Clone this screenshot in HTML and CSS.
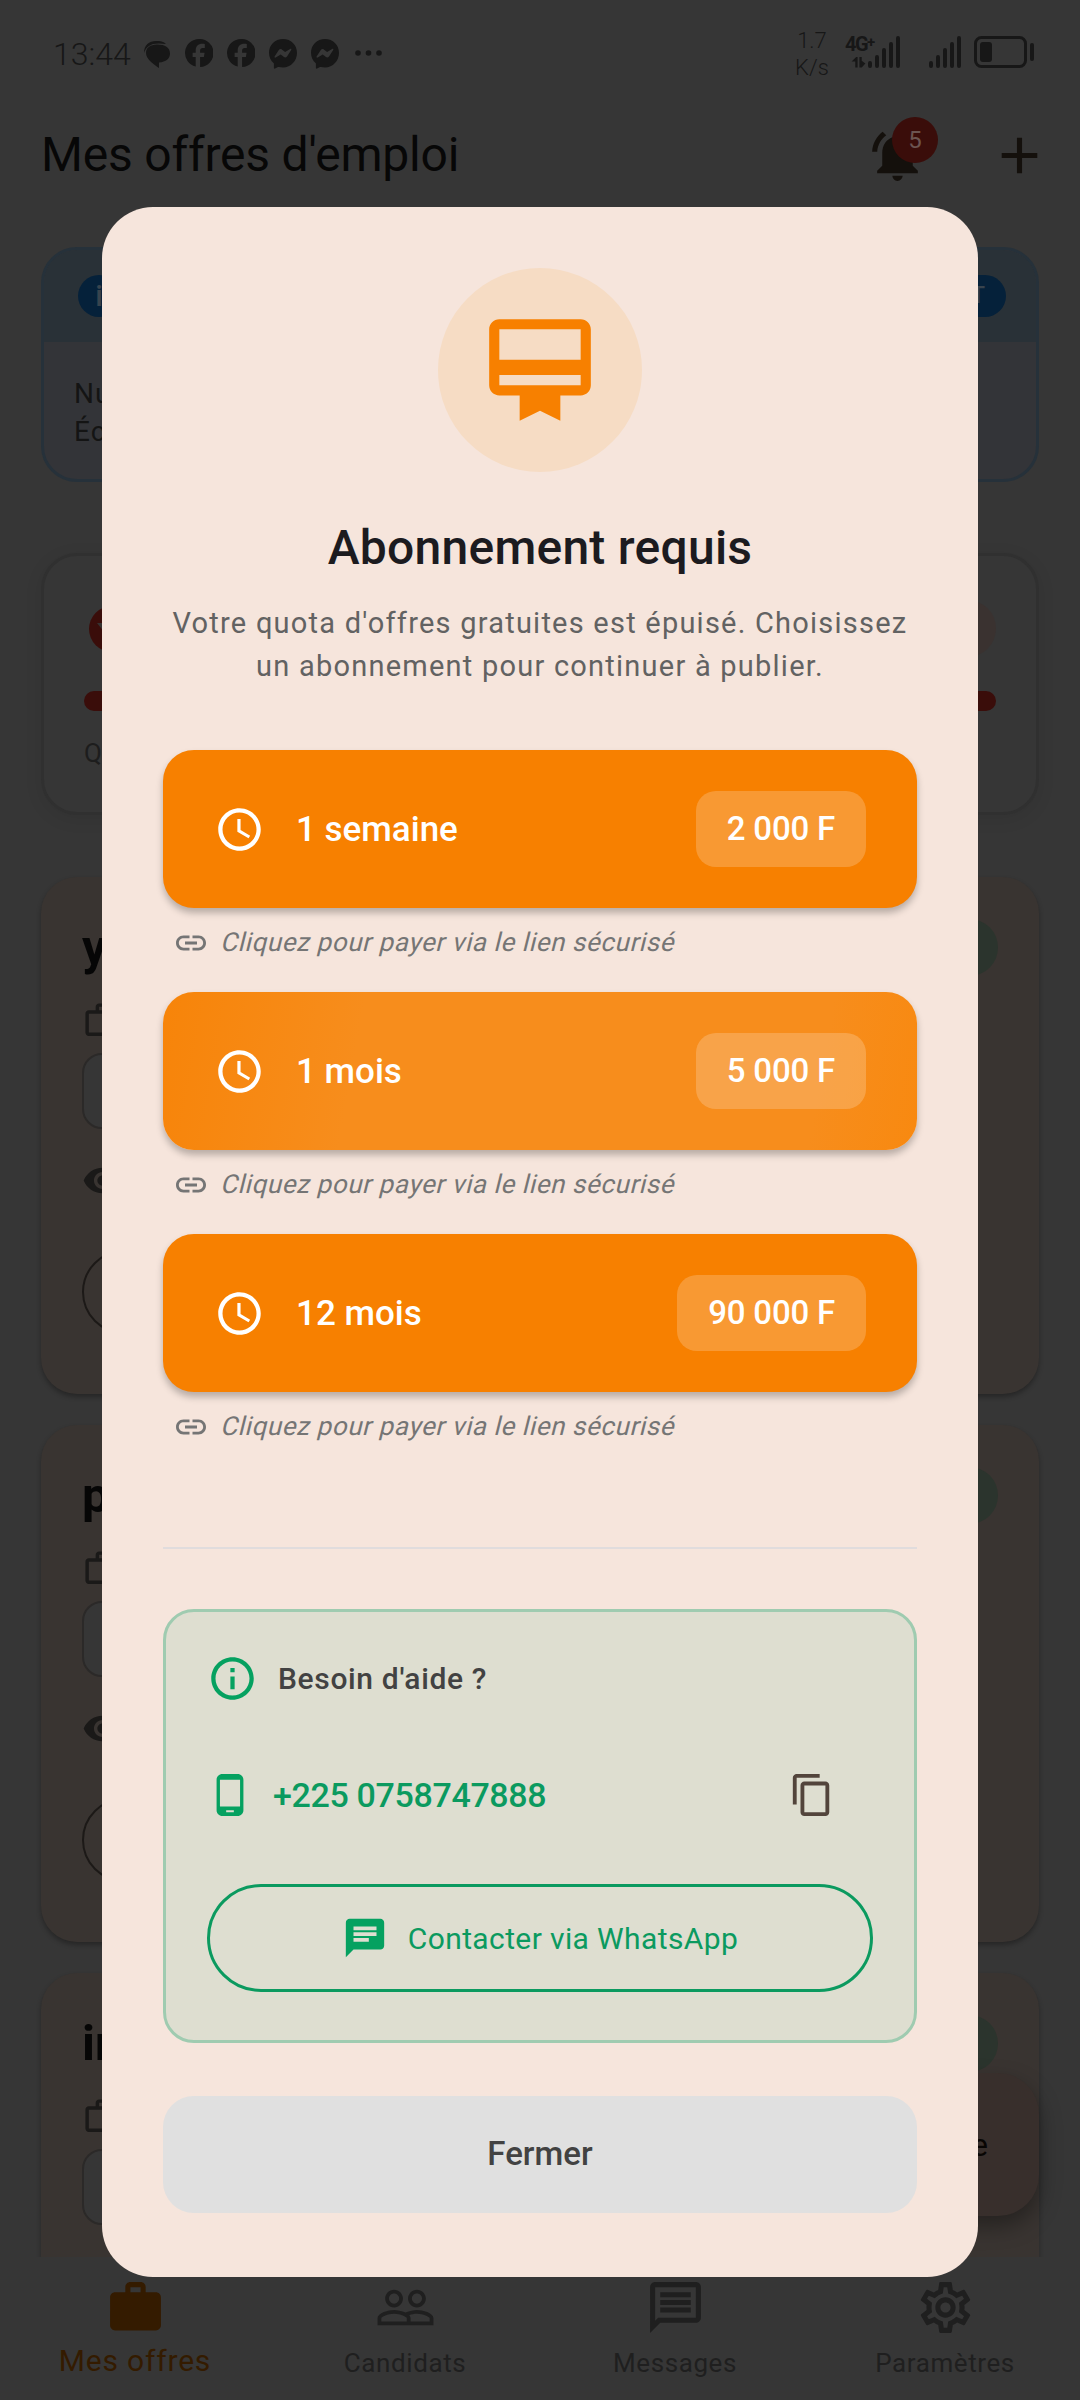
FILE: index.html
```html
<!DOCTYPE html>
<html lang="fr">
<head>
<meta charset="utf-8">
<title>Mes offres d'emploi</title>
<link rel="stylesheet" href="styles.css">
</head>
<body>
<svg width="0" height="0" class="defs" aria-hidden="true">
  <symbol id="work-outline" viewBox="0 0 24 24"><path fill-rule="evenodd" d="M14 6V4h-4v2h4zM4 8v11h16V8H4zm16-2c1.11 0 2 .89 2 2v11c0 1.11-.89 2-2 2H4c-1.11 0-2-.89-2-2l.01-11c0-1.11.88-2 1.99-2h4V4c0-1.11.89-2 2-2h4c1.11 0 2 .89 2 2v2h4z"/></symbol>
  <symbol id="eye" viewBox="0 0 24 24"><path d="M12 4.5C7 4.5 2.73 7.61 1 12c1.73 4.39 6 7.5 11 7.5s9.27-3.11 11-7.5c-1.73-4.39-6-7.5-11-7.5zM12 17c-2.76 0-5-2.24-5-5s2.24-5 5-5 5 2.24 5 5-2.24 5-5 5zm0-8c-1.66 0-3 1.34-3 3s1.34 3 3 3 3-1.34 3-3-1.34-3-3-3z"/></symbol>
  <symbol id="clock" viewBox="0 0 24 24"><path d="M11.99 2C6.47 2 2 6.48 2 12s4.47 10 9.99 10C17.52 22 22 17.52 22 12S17.52 2 11.99 2zM12 20c-4.42 0-8-3.58-8-8s3.58-8 8-8 8 3.58 8 8-3.58 8-8 8zm.5-13H11v6l5.25 3.15.75-1.23-4.5-2.67z"/></symbol>
  <symbol id="link" viewBox="0 0 24 24"><path d="M3.9 12c0-1.71 1.39-3.1 3.1-3.1h4V7H7c-2.76 0-5 2.24-5 5s2.24 5 5 5h4v-1.9H7c-1.71 0-3.1-1.39-3.1-3.1zM8 13h8v-2H8v2zm9-6h-4v1.9h4c1.71 0 3.1 1.39 3.1 3.1s-1.39 3.1-3.1 3.1h-4V17h4c2.76 0 5-2.24 5-5s-2.24-5-5-5z"/></symbol>
  <symbol id="facebook" viewBox="0 0 28 28"><path d="M14 0a14 14 0 0 0-3.300 27.600V18H7.600v-4.200h3.100v-2c0-4.700 2.300-7 6.700-7 .9 0 1.800.1 2.400.3V9h-2c-1.900 0-2.700.9-2.700 2.900v1.900h4.500L18.900 18h-3.800v10A14 14 0 0 0 14 0z"/></symbol>
  <symbol id="messenger" viewBox="0 0 28 30"><path fill-rule="evenodd" d="M14 0C6 0 0 5.900 0 13.800c0 4.200 1.700 7.700 4.500 10.200.3.200.4.500.4.900V29c0 .6.700.9 1.200.6l2.900-1.500c.3-.1.500-.1.800 0 1.300.3 2.700.5 4.200.5 8 0 14-6.900 14-14.800S22 0 14 0zM5.600 17.600l4.200-6.500c.7-1 2-1.300 3-.6l3.300 2.400 5-3c.8-.5 1.600.2 1.100 1l-4.200 6.500c-.7 1-2 1.300-3 .6l-3.300-2.400-5 3c-.7.500-1.600-.3-1.100-1z"/></symbol>
</svg>

<div class="screen">
  <header class="status">
    <span class="status-time">13:44</span>
    <svg class="status-chat" viewBox="0 0 26 27"><path d="M0 12C0 4 5 0 12 0c4 0 8 .5 10 3C16 2 8 2 5 5 2 7 1 9 0 12z"/><path d="M13 3.500c8 0 13 3 13 9 0 5-4 8.500-11 9v5.500C9 23 2 18 2 12c0-5 4-8.500 11-8.500z"/></svg>
    <svg class="status-app" viewBox="0 0 28 28"><use href="#facebook"/></svg>
    <svg class="status-app" viewBox="0 0 28 28"><use href="#facebook"/></svg>
    <svg class="status-msg" viewBox="0 0 28 30"><use href="#messenger"/></svg>
    <svg class="status-msg" viewBox="0 0 28 30"><use href="#messenger"/></svg>
    <svg class="status-dots" viewBox="0 0 27 6"><circle cx="3" cy="3" r="2.800"/><circle cx="13.500" cy="3" r="2.800"/><circle cx="24" cy="3" r="2.800"/></svg>
    <div class="status-speed"><span>1.7</span><span>K/s</span></div>
    <div class="status-net"><span class="net-type">4G<sup>+</sup></span><svg viewBox="0 0 15 12"><path d="M0 5l5-5h1.500v11.500H4V5zM8.500 0H11v4l4 3-4 4.500H8.500z"/></svg></div>
    <svg class="status-bars" viewBox="0 0 32 32"><path d="M2 27v3M9 21v9M16 14v16M23 8v22M30 2v28"/></svg>
    <svg class="status-bars second" viewBox="0 0 32 32"><path d="M2 27v3M9 21v9M16 14v16M23 8v22M30 2v28"/></svg>
    <svg class="status-battery" viewBox="0 0 61 33"><rect x="1.500" y="1.500" width="50" height="29" rx="6" fill="none" stroke="#171717" stroke-width="3"/><rect x="6" y="6" width="12" height="20" rx="3"/><rect x="56" y="7" width="4" height="18" rx="2"/></svg>
  </header>

  <div class="appbar">
    <h1>Mes offres d'emploi</h1>
    <div class="bell">
      <svg viewBox="0 0 24 24"><path d="M7.580 4.080L6.150 2.650C3.750 4.480 2.170 7.300 2.030 10.500h2c.15-2.650 1.510-4.970 3.550-6.420zM18 11c0-3.070-1.640-5.640-4.500-6.320V4c0-.83-.67-1.500-1.500-1.500s-1.500.67-1.500 1.500v.68C7.630 5.360 6 7.920 6 11v5l-2 2v1h16v-1l-2-2v-5zm-6 11c1.100 0 2-.9 2-2h-4c0 1.100.9 2 2 2z"/></svg>
      <span class="badge">5</span>
    </div>
    <svg class="add" viewBox="0 0 24 24"><path d="M19 13h-6v6h-2v-6H5v-2h6V5h2v6h6v2z"/></svg>
  </div>

  <main class="feed">
    <section class="notice">
      <div class="notice-head">
        <span class="notice-icon">i</span>
        <span class="notice-tag">T</span>
      </div>
      <p>Nu<br>Éc</p>
    </section>

    <section class="quota">
      <div class="quota-head"><svg class="quota-icon" viewBox="0 0 46 46"><circle cx="23" cy="23" r="23"/><path d="M8 17h30L23 36z" fill="#363231"/></svg><span class="quota-pill"></span></div>
      <div class="quota-bar"></div>
      <p>Q</p>
    </section>

    <article class="job">
      <div class="job-top"><h2>y</h2><span class="job-state"></span></div>
      <svg class="job-work"><use href="#work-outline"/></svg>
      <div class="job-chip"></div>
      <svg class="job-eye"><use href="#eye"/></svg>
      <div class="job-btn"></div>
    </article>
    <article class="job">
      <div class="job-top"><h2>p</h2><span class="job-state"></span></div>
      <svg class="job-work"><use href="#work-outline"/></svg>
      <div class="job-chip"></div>
      <svg class="job-eye"><use href="#eye"/></svg>
      <div class="job-btn"></div>
    </article>
    <article class="job">
      <div class="job-top"><h2>in</h2><span class="job-state"></span></div>
      <svg class="job-work"><use href="#work-outline"/></svg>
      <div class="job-chip"></div>
    </article>
    <div class="fab">e</div>
  </main>

  <nav class="tabs">
    <div class="tab active">
      <svg viewBox="0 0 24 24"><path d="M20 6h-4V4c0-1.110-.89-2-2-2h-4c-1.110 0-2 .89-2 2v2H4c-1.110 0-1.990.89-1.990 2L2 19c0 1.110.89 2 2 2h16c1.110 0 2-.89 2-2V8c0-1.110-.89-2-2-2zm-6 0h-4V4h4v2z"/></svg>
      <span>Mes offres</span>
    </div>
    <div class="tab">
      <svg viewBox="0 0 24 24"><path d="M16.500 13c-1.200 0-3.070.34-4.500 1-1.430-.67-3.300-1-4.500-1C5.330 13 1 14.080 1 16.250V19h22v-2.750c0-2.170-4.330-3.250-6.500-3.250zm-4 4.500h-10v-1.250c0-.54 2.560-1.750 5-1.750s5 1.210 5 1.750v1.250zm9 0H14v-1.250c0-.46-.2-.86-.52-1.220.88-.3 1.960-.53 3.020-.53 2.440 0 5 1.210 5 1.750v1.250zM7.500 12c1.930 0 3.500-1.570 3.500-3.500S9.430 5 7.500 5 4 6.570 4 8.500 5.570 12 7.500 12zm0-5.500c1.100 0 2 .9 2 2s-.9 2-2 2-2-.9-2-2 .9-2 2-2zm9 5.500c1.930 0 3.500-1.570 3.500-3.500S18.430 5 16.500 5 13 6.570 13 8.500s1.570 3.500 3.500 3.500zm0-5.500c1.100 0 2 .9 2 2s-.9 2-2 2-2-.9-2-2 .9-2 2-2z"/></svg>
      <span>Candidats</span>
    </div>
    <div class="tab">
      <svg viewBox="0 0 24 24"><path d="M4 4h16v12H5.170L4 17.170V4m0-2c-1.100 0-1.990.9-1.990 2L2 22l4-4h14c1.100 0 2-.9 2-2V4c0-1.100-.9-2-2-2H4zm2 10h12v2H6v-2zm0-3h12v2H6V9zm0-3h12v2H6V6z"/></svg>
      <span>Messages</span>
    </div>
    <div class="tab">
      <svg viewBox="0 0 24 24"><path d="M19.430 12.980c.04-.32.07-.64.07-.98 0-.34-.03-.66-.07-.98l2.110-1.650c.19-.15.24-.42.12-.64l-2-3.460c-.09-.16-.26-.25-.44-.25-.06 0-.12.010-.17.030l-2.490 1c-.52-.4-1.080-.73-1.690-.98l-.38-2.650C14.460 2.180 14.250 2 14 2h-4c-.25 0-.46.18-.49.42l-.38 2.650c-.61.25-1.170.59-1.690.98l-2.490-1c-.06-.02-.12-.03-.18-.03-.17 0-.34.09-.43.25l-2 3.460c-.13.22-.07.49.12.64l2.110 1.650c-.04.32-.07.65-.07.98 0 .33.03.66.07.98l-2.110 1.650c-.19.15-.24.42-.12.64l2 3.460c.09.16.26.25.44.25.06 0 .12-.01.17-.03l2.490-1c.52.4 1.080.73 1.690.98l.38 2.650c.03.24.24.42.49.42h4c.25 0 .46-.18.49-.42l.38-2.650c.61-.25 1.170-.59 1.690-.98l2.490 1c.06.02.12.03.18.03.17 0 .34-.09.43-.25l2-3.460c.12-.22.07-.49-.12-.64l-2.110-1.650zm-1.980-1.710c.04.31.05.52.05.73 0 .21-.02.43-.05.73l-.14 1.130.89.7 1.080.84-.7 1.210-1.270-.51-1.040-.42-.9.68c-.43.32-.84.56-1.250.73l-1.060.43-.16 1.130-.2 1.350h-1.400l-.19-1.350-.16-1.130-1.060-.43c-.43-.18-.83-.41-1.230-.71l-.91-.7-1.060.43-1.270.51-.7-1.210 1.080-.84.89-.7-.14-1.130c-.03-.31-.05-.54-.05-.74s.02-.43.05-.73l.14-1.130-.89-.7-1.080-.84.7-1.210 1.270.51 1.040.42.9-.68c.43-.32.84-.56 1.250-.73l1.060-.43.16-1.130.2-1.350h1.390l.19 1.350.16 1.130 1.060.43c.43.18.83.41 1.230.71l.91.7 1.060-.43 1.270-.51.7 1.210-1.070.85-.89.7.14 1.130zM12 8c-2.210 0-4 1.790-4 4s1.790 4 4 4 4-1.790 4-4-1.790-4-4-4zm0 6c-1.100 0-2-.9-2-2s.9-2 2-2 2 .9 2 2-.9 2-2 2z"/></svg>
      <span>Paramètres</span>
    </div>
  </nav>
</div>

<div class="overlay">
  <div class="dialog" role="dialog">
    <div class="hero"><svg viewBox="0 0 24 24"><path d="M20 2H4c-1.110 0-2 .89-2 2v11c0 1.110.89 2 2 2h4v5l4-2 4 2v-5h4c1.110 0 2-.89 2-2V4c0-1.110-.89-2-2-2zm0 13H4v-2h16v2zm0-5H4V4h16v6z"/></svg></div>
    <h2 class="title">Abonnement requis</h2>
    <p class="lead">Votre quota d'offres gratuites est épuisé. Choisissez<br>un abonnement pour continuer à publier.</p>

    <div class="plans">
      <div class="plan">
        <div class="plan-btn"><svg><use href="#clock"/></svg><span class="plan-name">1 semaine</span><span class="price">2 000 F</span></div>
        <div class="plan-note"><svg><use href="#link"/></svg><span>Cliquez pour payer via le lien sécurisé</span></div>
      </div>
      <div class="plan">
        <div class="plan-btn pressed"><svg><use href="#clock"/></svg><span class="plan-name">1 mois</span><span class="price">5 000 F</span></div>
        <div class="plan-note"><svg><use href="#link"/></svg><span>Cliquez pour payer via le lien sécurisé</span></div>
      </div>
      <div class="plan">
        <div class="plan-btn"><svg><use href="#clock"/></svg><span class="plan-name">12 mois</span><span class="price">90 000 F</span></div>
        <div class="plan-note"><svg><use href="#link"/></svg><span>Cliquez pour payer via le lien sécurisé</span></div>
      </div>
    </div>

    <div class="rule"></div>

    <section class="help">
      <div class="help-head">
        <svg viewBox="0 0 24 24"><path d="M11 7h2v2h-2zm0 4h2v6h-2zm1-9C6.480 2 2 6.480 2 12s4.480 10 10 10 10-4.480 10-10S17.520 2 12 2zm0 18c-4.410 0-8-3.590-8-8s3.590-8 8-8 8 3.590 8 8-3.590 8-8 8z"/></svg>
        <span>Besoin d'aide ?</span>
      </div>
      <div class="help-phone">
        <svg viewBox="0 0 24 24"><path d="M16 1H8C6.340 1 5 2.340 5 4v16c0 1.660 1.340 3 3 3h8c1.660 0 3-1.340 3-3V4c0-1.660-1.340-3-3-3zm-2 20h-4v-1h4v1zm3.250-3H6.750V4h10.500v14z"/></svg>
        <span>+225 0758747888</span>
        <svg class="copy" viewBox="0 0 24 24"><path d="M16 1H4c-1.100 0-2 .9-2 2v14h2V3h12V1zm3 4H8c-1.100 0-2 .9-2 2v14c0 1.100.9 2 2 2h11c1.100 0 2-.9 2-2V7c0-1.100-.9-2-2-2zm0 16H8V7h11v14z"/></svg>
      </div>
      <div class="whatsapp">
        <svg viewBox="0 0 24 24"><path d="M20 2H4c-1.100 0-1.990.9-1.990 2L2 22l4-4h14c1.100 0 2-.9 2-2V4c0-1.100-.9-2-2-2zM6 9h12v2H6V9zm8 5H6v-2h8v2zm4-6H6V6h12v2z"/></svg>
        <span>Contacter via WhatsApp</span>
      </div>
    </section>

    <div class="close">Fermer</div>
  </div>
</div>
</body>
</html>
```
FILE: styles.css
```css
* { box-sizing: border-box; margin: 0; padding: 0; }
body { width: 1080px; height: 2400px; overflow: hidden; background: #363636; font-family: Roboto, "Liberation Sans", sans-serif; }
svg { display: block; flex: none; }
.defs { position: absolute; }
.screen { width: 1080px; height: 2400px; display: flex; flex-direction: column; }

/* status bar */
.status { height: 102px; padding: 34px 45px 0 53px; display: flex; align-items: flex-start; color: #171717; fill: #171717; }
.status-time { width: 91px; font-size: 32px; line-height: 40px; font-weight: 300; }
.status-chat { width: 26px; height: 27px; margin-top: 7px; }
.status-app { width: 28px; height: 28px; margin: 5px 0 0 14px; }
.status-chat + .status-app { margin-left: 15px; }
.status-msg { width: 28px; height: 30px; margin: 5px 0 0 14px; }
.status-dots { width: 27px; height: 6px; margin: 16px 0 0 16px; }
.status-speed { margin: -7px 0 0 auto; width: 46px; display: flex; flex-direction: column; align-items: center; font-size: 22px; line-height: 27px; font-weight: 300; }
.status-net { width: 27px; margin: 0 0 0 10px; display: flex; flex-direction: column; align-items: flex-end; }
.net-type { font-size: 20px; line-height: 20px; height: 23px; font-weight: 700; width: 27px; white-space: nowrap; letter-spacing: -1.500px; }
.net-type sup { font-size: 15px; line-height: 0; vertical-align: 4px; }
.status-net svg { width: 15px; height: 11px; margin-right: 6px; }
.status-bars { width: 32px; height: 32px; margin: 2px 0 0 -4px; fill: none; stroke: #171717; stroke-width: 4; stroke-linecap: round; }
.status-bars.second { margin-left: 29px; }
.status-battery { width: 61px; height: 33px; margin: 2px 0 0 13px; }

/* app bar */
.appbar { height: 145px; padding: 23px 30px 0 41px; display: flex; align-items: flex-start; fill: #14100c; }
.appbar h1 { font-size: 48px; line-height: 60px; font-weight: 400; letter-spacing: -.200px; color: #070707; white-space: nowrap; }
.bell { position: relative; width: 61px; height: 61px; margin-left: auto; }
.bell svg { width: 61px; height: 61px; }
.badge { position: absolute; left: 25px; top: -8px; width: 46px; height: 46px; border-radius: 50%; background: #3a0d0a; color: #6c5551; font-size: 24px; line-height: 46px; text-align: center; }
.add { width: 61px; height: 61px; margin-left: 61px; }

/* feed */
.feed { position: relative; height: 2010px; padding: 0 41px; overflow: hidden; }
.notice { height: 235px; border: 3px solid #26313a; border-radius: 36px; background: #333438; overflow: hidden; }
.notice-head { height: 92px; padding: 25px 30px 0 34px; background: #293137; display: flex; justify-content: space-between; }
.notice-icon, .notice-tag { height: 42px; border-radius: 21px; background: #05213a; color: #38444e; line-height: 42px; font-weight: 500; }
.notice-icon { width: 42px; font-size: 30px; text-align: center; }
.notice-tag { width: 90px; padding-right: 21px; font-size: 23px; text-align: right; }
.notice p { padding: 33px 0 0 30px; font-size: 28px; line-height: 38px; letter-spacing: 1px; color: #141414; }
.quota { height: 262px; margin-top: 71px; padding: 44px 40px 0; border: 3px solid #303030; border-radius: 36px; box-shadow: 0 4px 18px rgba(0,0,0,.08); }
.quota-head { display: flex; justify-content: space-between; align-items: center; height: 57px; padding-left: 5px; }
.quota-icon { width: 46px; height: 46px; fill: #3a0d0a; }
.quota-pill { width: 110px; height: 57px; border-radius: 29px; background: #3a3230; }
.quota-bar { height: 20px; margin-top: 34px; border-radius: 10px; background: #3a0d0a; }
.quota p { margin-top: 26px; font-size: 26px; line-height: 32px; color: #1d1d1d; }
.job { height: 517px; margin-top: 31px; padding: 42px 41px 0; border-radius: 36px; background: #393431; box-shadow: 0 3px 5px rgba(0,0,0,.3); }
.quota + .job { margin-top: 62px; }
.job-top { height: 81px; display: flex; justify-content: space-between; }
.job h2 { font-size: 49px; line-height: 58px; font-weight: 700; color: #060606; }
.job-state { width: 110px; height: 57px; border-radius: 29px; background: #2b342d; }
.job-work, .job-eye { width: 41px; height: 41px; fill: #1a1918; }
.job-chip { width: 420px; height: 76px; margin-top: 12px; border: 2.500px solid #2b2928; border-radius: 20px; background: #363636; }
.job-eye { margin-top: 31px; }
.job-btn { width: 420px; height: 84px; margin-top: 49px; border: 2.500px solid #1c1917; border-radius: 42px; }
.fab { position: absolute; left: 720px; top: 1826px; width: 319px; height: 143px; padding-right: 51px; border-radius: 41px; background: #382f2c; box-shadow: 0 10px 22px rgba(0,0,0,.35); color: #080503; font-size: 31px; line-height: 145px; text-align: right; }

/* bottom tabs */
.tabs { height: 143px; display: flex; }
.tab { flex: 1; padding-top: 20px; display: flex; flex-direction: column; align-items: center; fill: #1f1f1f; color: #1f1f1f; font-size: 26px; letter-spacing: .6px; }
.tab svg { width: 61px; height: 61px; }
.tab span { line-height: 32px; margin-top: 9px; }
.tab.active { fill: #341b00; color: #341b00; font-size: 30px; letter-spacing: .8px; }
.tab.active span { margin-top: 7px; }

/* dialog */
.overlay { position: fixed; inset: 0; padding: 207px 102px 0; }
.dialog { height: 2070px; padding: 61px; border-radius: 51px; background: #f6e5dc; display: flex; flex-direction: column; }
.hero { width: 204px; height: 204px; align-self: center; border-radius: 50%; background: #f6dcc4; display: flex; align-items: center; justify-content: center; fill: #f78000; }
.hero svg { width: 122px; height: 122px; }
.title { margin-top: 46px; text-align: center; font-size: 48px; line-height: 60px; font-weight: 500; letter-spacing: .250px; color: #1c1b1f; }
.lead { margin-top: 24px; text-align: center; font-size: 29px; line-height: 43px; letter-spacing: 1.230px; color: #626262; white-space: nowrap; }
.plans { margin-top: 62px; }
.plan { height: 242px; }
.plan-btn { height: 158px; padding: 0 51px; border-radius: 31px; background: #f78000; box-shadow: 0 5px 7px rgba(0,0,0,.25); display: flex; align-items: center; color: #fff; fill: #fff; font-size: 35px; font-weight: 500; }
.plan-btn.pressed { background: linear-gradient(100deg, #f78409 0%, #f78d1c 26%, #f78d1c 86%, #f88910 100%); }
.plan-btn svg { width: 51px; height: 51px; }
.plan-name { margin-left: 31px; }
.price { margin-left: auto; height: 76px; padding: 0 31px; border-radius: 20px; background: rgba(255,255,255,.2); font-size: 33px; line-height: 75px; letter-spacing: -.200px; }
.plan-note { padding: 16px 0 0 10px; display: flex; align-items: center; gap: 13px; fill: #757575; color: #757575; font-size: 26px; line-height: 37px; letter-spacing: .580px; }
.plan-note span { transform: skewX(-14deg); }
.plan-note svg { width: 36px; height: 36px; }
.rule { height: 2px; margin-top: 71px; background: #e0dcdd; }
.help { height: 434px; margin-top: 60px; padding: 41px; border: 3px solid #9fcbb0; border-radius: 31px; background: #deded0; fill: #05a160; color: #0b9a5f; }
.help-head { height: 51px; display: flex; align-items: center; color: #424242; font-size: 30px; font-weight: 500; letter-spacing: .650px; }
.help-head svg { width: 51px; height: 51px; }
.help-head span { margin-left: 20px; }
.help-phone { height: 46px; margin-top: 68px; padding-right: 38px; display: flex; align-items: center; font-size: 34px; letter-spacing: -.350px; font-weight: 500; }
.help-phone svg { width: 46px; height: 46px; }
.help-phone span { margin-left: 20px; }
.help-phone .copy { margin-left: auto; fill: #52443b; }
.whatsapp { height: 108px; margin-top: 66px; border: 3px solid #0b9a5f; border-radius: 54px; display: flex; align-items: center; justify-content: center; gap: 20px; font-size: 30px; letter-spacing: .380px; }
.whatsapp svg { width: 46px; height: 46px; }
.close { height: 117px; margin-top: 53px; border-radius: 31px; background: #e0e0e0; text-align: center; line-height: 116px; font-size: 33px; font-weight: 500; color: #424242; }
```
